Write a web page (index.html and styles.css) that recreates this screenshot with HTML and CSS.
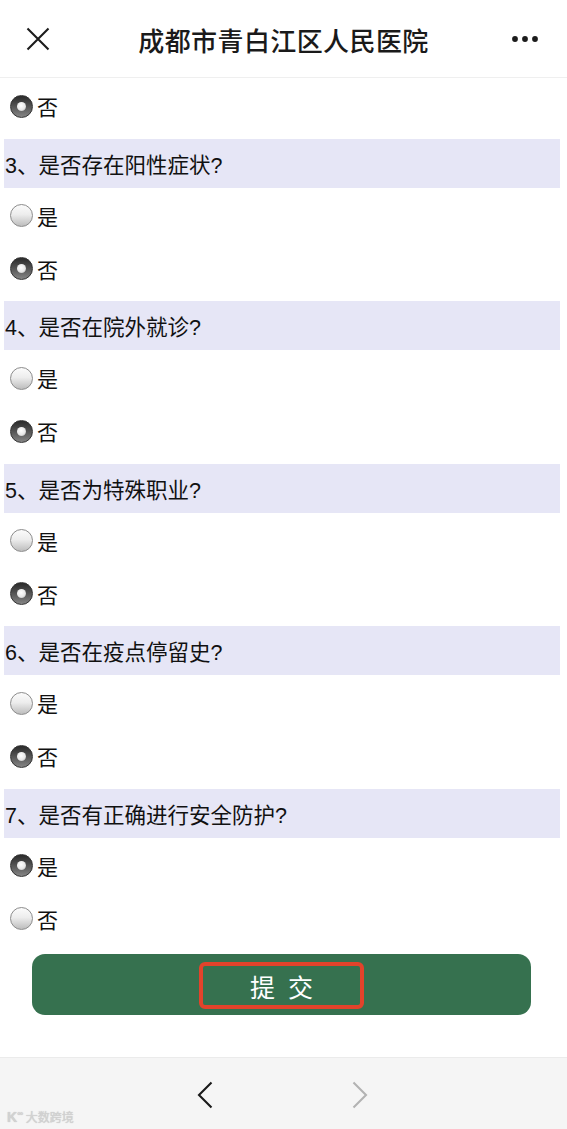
FILE: index.html
```html
<!DOCTYPE html>
<html lang="zh-CN">
<head>
<meta charset="utf-8">
<title>成都市青白江区人民医院</title>
<link rel="stylesheet" href="styles.css">
</head>
<body>
<div class="app">
  <header class="topbar">
    <span class="tb-left">
      <svg class="ic-close" width="24" height="24" viewBox="0 0 24 24"><path d="M1.5 1.5 L22.5 22.5 M22.5 1.5 L1.5 22.5" stroke="#1c1c1c" stroke-width="2.1" fill="none"/></svg>
    </span>
    <h1 class="title">成都市青白江区人民医院</h1>
    <span class="tb-right">
      <svg width="30" height="8" viewBox="0 0 30 8"><circle cx="4" cy="4" r="2.9" fill="#1c1c1c"/><circle cx="14" cy="4" r="2.9" fill="#1c1c1c"/><circle cx="24" cy="4" r="2.9" fill="#1c1c1c"/></svg>
    </span>
  </header>

  <main class="content">
    <div class="opts lead">
      <label class="opt"><input type="radio" name="q2" class="radio" checked><span>否</span></label>
    </div>

    <section class="q">
      <div class="q-title">3、是否存在阳性症状?</div>
      <div class="opts">
        <label class="opt"><input type="radio" name="q3" class="radio"><span>是</span></label>
        <label class="opt"><input type="radio" name="q3" class="radio" checked><span>否</span></label>
      </div>
    </section>

    <section class="q">
      <div class="q-title">4、是否在院外就诊?</div>
      <div class="opts">
        <label class="opt"><input type="radio" name="q4" class="radio"><span>是</span></label>
        <label class="opt"><input type="radio" name="q4" class="radio" checked><span>否</span></label>
      </div>
    </section>

    <section class="q">
      <div class="q-title">5、是否为特殊职业?</div>
      <div class="opts">
        <label class="opt"><input type="radio" name="q5" class="radio"><span>是</span></label>
        <label class="opt"><input type="radio" name="q5" class="radio" checked><span>否</span></label>
      </div>
    </section>

    <section class="q">
      <div class="q-title">6、是否在疫点停留史?</div>
      <div class="opts">
        <label class="opt"><input type="radio" name="q6" class="radio"><span>是</span></label>
        <label class="opt"><input type="radio" name="q6" class="radio" checked><span>否</span></label>
      </div>
    </section>

    <section class="q">
      <div class="q-title">7、是否有正确进行安全防护?</div>
      <div class="opts">
        <label class="opt"><input type="radio" name="q7" class="radio" checked><span>是</span></label>
        <label class="opt"><input type="radio" name="q7" class="radio"><span>否</span></label>
      </div>
    </section>

    <button class="submit" type="button"><span class="submit-box"><span>提</span><span>交</span></span></button>
  </main>

  <footer class="navbar">
    <span class="nav-btn">
      <svg width="16" height="28" viewBox="0 0 16 28"><path d="M14.5 1.5 L2 14 L14.5 26.5" stroke="#1a1a1a" stroke-width="2.1" fill="none"/></svg>
    </span>
    <span class="nav-btn">
      <svg width="16" height="28" viewBox="0 0 16 28"><path d="M1.5 1.5 L14 14 L1.5 26.5" stroke="#b3b3b3" stroke-width="2.1" fill="none"/></svg>
    </span>
    <span class="watermark"><span class="wm-logo">K<sup>∞</sup></span><span class="wm-text">大数跨境</span></span>
  </footer>
</div>
</body>
</html>
```

FILE: styles.css
```css
html, body {
  margin: 0;
  padding: 0;
  background: #ffffff;
}

body {
  font-family: "Noto Sans CJK SC", "Liberation Sans", sans-serif;
  color: #111;
}

.app {
  display: flex;
  flex-direction: column;
  height: 1129px;
  overflow: hidden;
}

.topbar {
  flex: 0 0 77px;
  display: flex;
  align-items: center;
  border-bottom: 1px solid #efefef;
  background: #fff;
}

.tb-left {
  width: 110px;
  display: flex;
  padding-left: 26px;
  box-sizing: border-box;
}

.tb-right {
  width: 110px;
  display: flex;
  justify-content: flex-end;
  padding-right: 26px;
  box-sizing: border-box;
}

.title {
  flex: 1;
  margin: 0;
  text-align: center;
  font-size: 26px;
  font-weight: 500;
  color: #1a1a1a;
  letter-spacing: 0.4px;
  line-height: 1;
  position: relative;
  top: 1px;
}

.content {
  flex: 1;
  overflow: hidden;
}

.opts {
  padding: 1.5px 0 6px 0;
}

.opt {
  height: 53px;
  display: flex;
  align-items: center;
  padding-left: 10px;
  font-size: 21px;
  color: #111;
  font-family: "Noto Sans CJK SC", sans-serif;
}

.opt span {
  margin-left: 4px;
}

.q-title {
  height: 49px;
  margin: 0 7px 0 4px;
  background: #e6e6f6;
  display: flex;
  align-items: center;
  font-size: 21.5px;
  padding-left: 1px;
  font-family: "Liberation Sans", "Noto Sans CJK SC", sans-serif;
  color: #111;
}

.radio {
  -webkit-appearance: none;
  appearance: none;
  margin: 0;
  width: 23px;
  height: 23px;
  border-radius: 50%;
  box-sizing: border-box;
  border: 1px solid #8c8c8c;
  background: linear-gradient(#fbfbfb 0%, #ededed 45%, #bdbdbd 100%);
  position: relative;
}

.radio:checked {
  border: 1px solid #333;
  background: linear-gradient(#2a2a2a 0%, #505050 45%, #858585 100%);
}

.radio:checked::after {
  content: "";
  position: absolute;
  left: 6px;
  top: 6px;
  width: 9px;
  height: 9px;
  border-radius: 50%;
  background: radial-gradient(circle at 45% 40%, #ffffff 0%, #e8e8e8 55%, #a9a9a9 100%);
}

.submit {
  display: flex;
  justify-content: center;
  align-items: center;
  margin: 2.5px 0 0 32px;
  width: 499px;
  height: 61px;
  border: none;
  border-radius: 13px;
  background: #36714f;
  padding: 3px 0 0 0;
  cursor: pointer;
}

.submit-box {
  display: flex;
  justify-content: center;
  align-items: center;
  gap: 13px;
  width: 165px;
  height: 47px;
  box-sizing: border-box;
  border: 4px solid #e2432b;
  border-radius: 6px;
  color: #fff;
  font-size: 25px;
  font-family: "Noto Sans CJK SC", sans-serif;
}

.navbar {
  flex: 0 0 72px;
  box-sizing: border-box;
  border-top: 1px solid #ebebeb;
  background: #f5f5f5;
  display: flex;
  justify-content: center;
  align-items: center;
  gap: 139px;
  position: relative;
  padding-right: 2px;
  padding-top: 2px;
}

.nav-btn {
  display: flex;
}

.watermark {
  position: absolute;
  left: 7px;
  bottom: 5px;
  display: flex;
  align-items: center;
  gap: 3px;
  color: #d2d2d2;
  font-size: 12px;
  line-height: 1;
  text-shadow: 0 0 1px #bdbdbd;
}

.wm-logo {
  font-family: "Liberation Sans", sans-serif;
  font-size: 14px;
  font-weight: bold;
}

.wm-logo sup {
  font-size: 8px;
}

.wm-text {
  font-family: "Noto Sans CJK SC", sans-serif;
}
```
